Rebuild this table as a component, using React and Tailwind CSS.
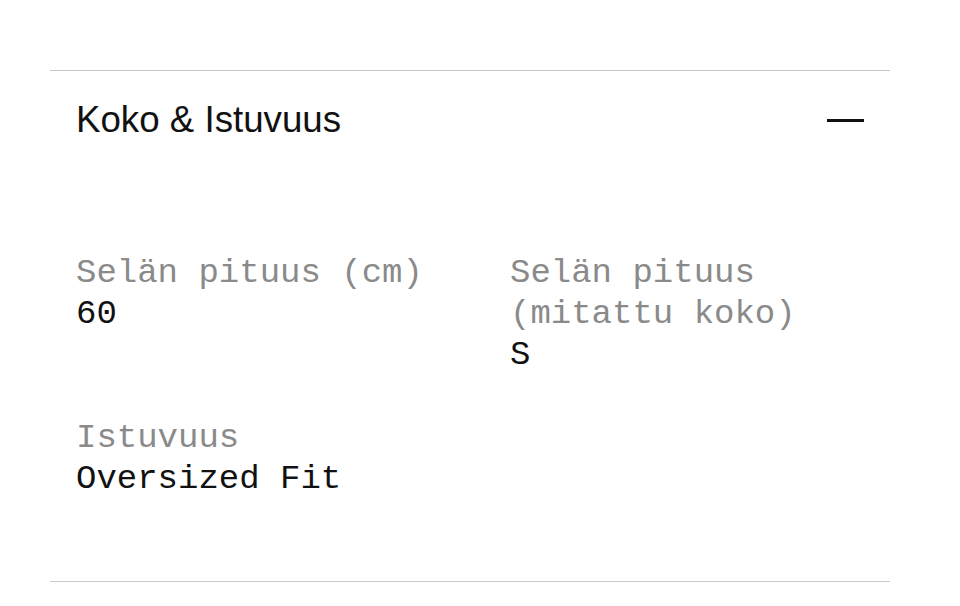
import React from 'react'

const specs = [
  { label: 'Selän pituus (cm)', value: '60' },
  { label: 'Selän pituus (mitattu koko)', value: 'S' },
  { label: 'Istuvuus', value: 'Oversized Fit' },
]

function Spec({ label, value }) {
  return (
    <div className="text-[34px] leading-[41px] font-['Liberation_Mono',monospace]">
      <div className="text-[#8a8a8a]">{label}</div>
      <div className="text-[#111]">{value}</div>
    </div>
  )
}

export default function App() {
  return (
    <div className="min-h-screen bg-white pt-[70px]">
      <div className="ml-[50px] w-[840px] border-t border-b border-[#c9c9c9]">
        {/* Accordion header */}
        <div className="flex items-center justify-between h-[98px] px-[26px]">
          <h2 className="text-[36.7px] text-[#111] font-['Liberation_Sans',Arial,sans-serif] font-normal">
            Koko &amp; Istuvuus
          </h2>
          <span className="block w-[37px] h-[3px] bg-[#111]" />
        </div>

        {/* Body */}
        <div className="grid grid-cols-[434px_1fr] gap-y-[42px] px-[26px] pt-[84px] pb-[81px]">
          {specs.map((s) => (
            <Spec key={s.label} label={s.label} value={s.value} />
          ))}
        </div>
      </div>
    </div>
  )
}
